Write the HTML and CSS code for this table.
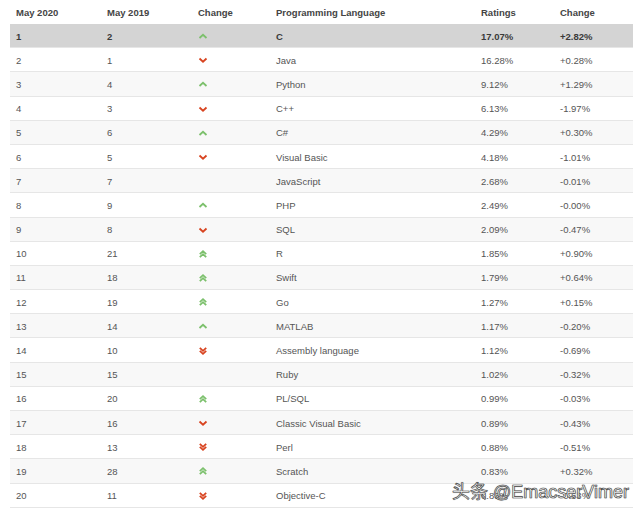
FILE: index.html
```html
<!DOCTYPE html>
<html>
<head>
<meta charset="utf-8">
<link rel="stylesheet" href="styles.css">
</head>
<body>
<div class="page">
  <div class="table">
    <div class="row head">
      <div>May 2020</div><div>May 2019</div><div>Change</div><div>Programming Language</div><div>Ratings</div><div>Change</div>
    </div>
    <div class="row top">
      <div>1</div><div>2</div><div><svg class="ic up" viewBox="0 0 10 10"><path d="M1.5 7 L5 3.8 L8.5 7"/></svg></div><div>C</div><div>17.07%</div><div>+2.82%</div>
    </div>
    <div class="row">
      <div>2</div><div>1</div><div><svg class="ic down" viewBox="0 0 10 10"><path d="M1.5 3.5 L5 6.7 L8.5 3.5"/></svg></div><div>Java</div><div>16.28%</div><div>+0.28%</div>
    </div>
    <div class="row alt">
      <div>3</div><div>4</div><div><svg class="ic up" viewBox="0 0 10 10"><path d="M1.5 7 L5 3.8 L8.5 7"/></svg></div><div>Python</div><div>9.12%</div><div>+1.29%</div>
    </div>
    <div class="row">
      <div>4</div><div>3</div><div><svg class="ic down" viewBox="0 0 10 10"><path d="M1.5 3.5 L5 6.7 L8.5 3.5"/></svg></div><div>C++</div><div>6.13%</div><div>-1.97%</div>
    </div>
    <div class="row alt">
      <div>5</div><div>6</div><div><svg class="ic up" viewBox="0 0 10 10"><path d="M1.5 7 L5 3.8 L8.5 7"/></svg></div><div>C#</div><div>4.29%</div><div>+0.30%</div>
    </div>
    <div class="row">
      <div>6</div><div>5</div><div><svg class="ic down" viewBox="0 0 10 10"><path d="M1.5 3.5 L5 6.7 L8.5 3.5"/></svg></div><div>Visual Basic</div><div>4.18%</div><div>-1.01%</div>
    </div>
    <div class="row alt">
      <div>7</div><div>7</div><div></div><div>JavaScript</div><div>2.68%</div><div>-0.01%</div>
    </div>
    <div class="row">
      <div>8</div><div>9</div><div><svg class="ic up" viewBox="0 0 10 10"><path d="M1.5 7 L5 3.8 L8.5 7"/></svg></div><div>PHP</div><div>2.49%</div><div>-0.00%</div>
    </div>
    <div class="row alt">
      <div>9</div><div>8</div><div><svg class="ic down" viewBox="0 0 10 10"><path d="M1.5 3.5 L5 6.7 L8.5 3.5"/></svg></div><div>SQL</div><div>2.09%</div><div>-0.47%</div>
    </div>
    <div class="row">
      <div>10</div><div>21</div><div><svg class="ic up" viewBox="0 0 10 10"><path d="M1.8 5.2 L5 2.2 L8.2 5.2 M1.8 8.2 L5 5.2 L8.2 8.2"/></svg></div><div>R</div><div>1.85%</div><div>+0.90%</div>
    </div>
    <div class="row alt">
      <div>11</div><div>18</div><div><svg class="ic up" viewBox="0 0 10 10"><path d="M1.8 5.2 L5 2.2 L8.2 5.2 M1.8 8.2 L5 5.2 L8.2 8.2"/></svg></div><div>Swift</div><div>1.79%</div><div>+0.64%</div>
    </div>
    <div class="row">
      <div>12</div><div>19</div><div><svg class="ic up" viewBox="0 0 10 10"><path d="M1.8 5.2 L5 2.2 L8.2 5.2 M1.8 8.2 L5 5.2 L8.2 8.2"/></svg></div><div>Go</div><div>1.27%</div><div>+0.15%</div>
    </div>
    <div class="row alt">
      <div>13</div><div>14</div><div><svg class="ic up" viewBox="0 0 10 10"><path d="M1.5 7 L5 3.8 L8.5 7"/></svg></div><div>MATLAB</div><div>1.17%</div><div>-0.20%</div>
    </div>
    <div class="row">
      <div>14</div><div>10</div><div><svg class="ic down" viewBox="0 0 10 10"><path d="M1.8 1.8 L5 4.8 L8.2 1.8 M1.8 4.8 L5 7.8 L8.2 4.8"/></svg></div><div>Assembly language</div><div>1.12%</div><div>-0.69%</div>
    </div>
    <div class="row alt">
      <div>15</div><div>15</div><div></div><div>Ruby</div><div>1.02%</div><div>-0.32%</div>
    </div>
    <div class="row">
      <div>16</div><div>20</div><div><svg class="ic up" viewBox="0 0 10 10"><path d="M1.8 5.2 L5 2.2 L8.2 5.2 M1.8 8.2 L5 5.2 L8.2 8.2"/></svg></div><div>PL/SQL</div><div>0.99%</div><div>-0.03%</div>
    </div>
    <div class="row alt">
      <div>17</div><div>16</div><div><svg class="ic down" viewBox="0 0 10 10"><path d="M1.5 3.5 L5 6.7 L8.5 3.5"/></svg></div><div>Classic Visual Basic</div><div>0.89%</div><div>-0.43%</div>
    </div>
    <div class="row">
      <div>18</div><div>13</div><div><svg class="ic down" viewBox="0 0 10 10"><path d="M1.8 1.8 L5 4.8 L8.2 1.8 M1.8 4.8 L5 7.8 L8.2 4.8"/></svg></div><div>Perl</div><div>0.88%</div><div>-0.51%</div>
    </div>
    <div class="row alt">
      <div>19</div><div>28</div><div><svg class="ic up" viewBox="0 0 10 10"><path d="M1.8 5.2 L5 2.2 L8.2 5.2 M1.8 8.2 L5 5.2 L8.2 8.2"/></svg></div><div>Scratch</div><div>0.83%</div><div>+0.32%</div>
    </div>
    <div class="row">
      <div>20</div><div>11</div><div><svg class="ic down" viewBox="0 0 10 10"><path d="M1.8 1.8 L5 4.8 L8.2 1.8 M1.8 4.8 L5 7.8 L8.2 4.8"/></svg></div><div>Objective-C</div><div>0.83%</div><div>-0.63%</div>
    </div>
  </div>
  <div class="mark">头条 @EmacserVimer</div>
</div>
</body>
</html>
```
FILE: styles.css
```css
html, body {
  margin: 0;
  padding: 0;
  background: #ffffff;
}
.page {
  position: relative;
  width: 640px;
  height: 512px;
  overflow: hidden;
  font-family: "Liberation Sans", Arial, sans-serif;
  font-size: 9.5px;
  color: #555555;
}
.table {
  margin-left: 10px;
  width: 623px;
  display: flex;
  flex-direction: column;
}
.row {
  display: grid;
  grid-template-columns: 91px 91px 78px 205px 79px 79px;
  height: 24.2px;
  align-items: center;
  box-sizing: border-box;
  border-bottom: 1px solid #e6e6e6;
}
.row > div {
  padding-left: 6px;
  padding-top: 1px;
  display: flex;
  align-items: center;
}
.row.head {
  height: 24px;
  border-bottom: none;
  font-weight: bold;
  color: #444444;
}
.row.head > div {
  padding-top: 0;
}
.row.top {
  background: #d4d4d4;
  font-weight: bold;
  color: #3a3a3a;
  border-bottom: 1px solid #e6e6e6;
}
.row.alt {
  background: #f8f8f8;
}
.ic {
  width: 10px;
  height: 10px;
  fill: none;
  stroke-width: 1.8;
  stroke-linecap: butt;
  stroke-linejoin: miter;
}
.ic.up { stroke: #7cc06c; }
.ic.down { stroke: #d8431f; }
.mark {
  position: absolute;
  left: 452px;
  top: 477px;
  font-family: "Liberation Sans", "Noto Sans CJK SC", sans-serif;
  font-size: 18px;
  color: #ffffff;
  -webkit-text-stroke: 0.6px #444444;
  text-shadow: 0 0 1px #555;
  white-space: nowrap;
}
```
